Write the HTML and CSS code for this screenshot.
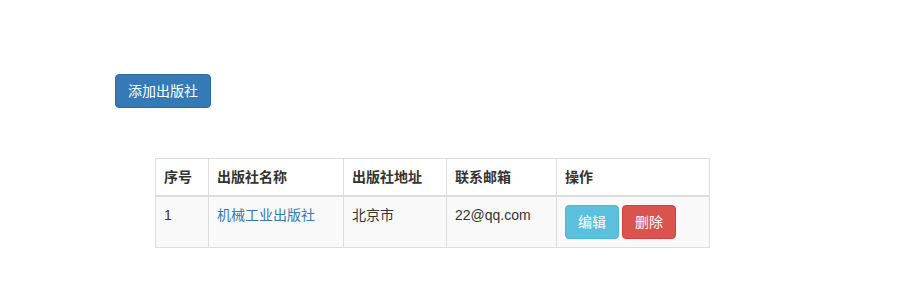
FILE: index.html
```html
<!DOCTYPE html>
<html lang="zh-CN">
<head>
  <meta charset="UTF-8">
  <title>出版社管理</title>
  <link rel="stylesheet" href="styles.css">
</head>
<body>
  <div class="page">
    <button type="button" class="btn btn-primary">添加出版社</button>

    <table class="table">
      <thead>
        <tr>
          <th class="col-id">序号</th>
          <th class="col-name">出版社名称</th>
          <th class="col-addr">出版社地址</th>
          <th class="col-mail">联系邮箱</th>
          <th class="col-op">操作</th>
        </tr>
      </thead>
      <tbody>
        <tr>
          <td>1</td>
          <td><a href="#">机械工业出版社</a></td>
          <td>北京市</td>
          <td>22@qq.com</td>
          <td class="ops">
            <button type="button" class="btn btn-info">编辑</button>
            <button type="button" class="btn btn-danger">删除</button>
          </td>
        </tr>
      </tbody>
    </table>
  </div>
</body>
</html>
```

FILE: styles.css
```css
body {
  margin: 0;
  font-family: "Liberation Sans", Arial, "Noto Sans CJK SC", sans-serif;
  font-size: 14px;
  line-height: 20px;
  color: #333;
  background: #fff;
}

.page {
  padding: 74px 0 0 115px;
}

.btn {
  display: inline-block;
  padding: 6px 12px;
  font-family: inherit;
  font-size: 14px;
  line-height: 20px;
  color: #fff;
  border: 1px solid transparent;
  border-radius: 4px;
  cursor: pointer;
  vertical-align: middle;
}

.btn-primary {
  background-color: #337ab7;
  border-color: #2e6da4;
}

.btn-info {
  background-color: #5bc0de;
  border-color: #46b8da;
}

.btn-danger {
  background-color: #d9534f;
  border-color: #d43f3a;
}

.table {
  margin: 50px 0 0 40px;
  width: 554px;
  table-layout: fixed;
  border-collapse: collapse;
  border: 1px solid #ddd;
}

.table th,
.table td {
  padding: 8px;
  text-align: left;
  vertical-align: top;
  border: 1px solid #ddd;
}

.table th {
  font-weight: bold;
  border-bottom: 2px solid #ddd;
}

.table tbody tr:nth-child(odd) {
  background-color: #f9f9f9;
}

.table a {
  color: #337ab7;
  text-decoration: none;
}

.ops {
  word-spacing: -1px;
}

.col-id { width: 36px; }
.col-name { width: 118px; }
.col-addr { width: 86px; }
.col-mail { width: 93px; }
.col-op { width: 136px; }
```
